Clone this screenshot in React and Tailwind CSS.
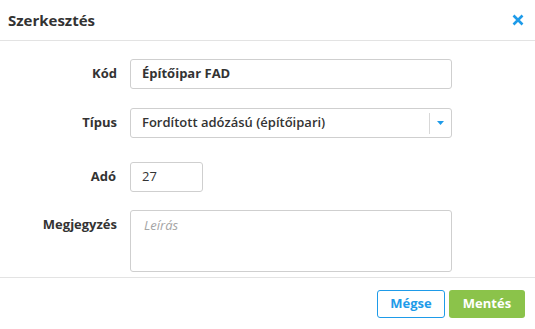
import React from "react";

export default function App() {
  const font = { fontFamily: '"Open Sans", "Noto Sans", sans-serif' };
  return (
    <div className="w-[535px] h-[329px] bg-white text-[#333] overflow-hidden flex flex-col" style={font}>
      <div className="h-[41px] border-b border-[#e3e3e3] flex items-center justify-between pl-2 pr-[11px] shrink-0">
        <div className="text-[15px] font-bold text-[#333] leading-none">Szerkesztés</div>
        <svg width="12" height="12" viewBox="0 0 12 12" className="mt-[-1px]">
          <path d="M1.5 1.5 L10.5 10.5 M10.5 1.5 L1.5 10.5" stroke="#1e9be9" strokeWidth="2.6" strokeLinecap="butt" />
        </svg>
      </div>
      <div className="flex-1 pt-[18px] flex flex-col">
        <div className="flex items-center h-[30px]">
          <div className="w-[117px] text-right text-[13px] font-bold">Kód</div>
          <div className="ml-[13px] w-[322px] h-[30px] border border-[#cfcfcf] rounded-[3px] flex items-center pl-[11px] text-[13px] font-bold">
            Építőipar FAD
          </div>
        </div>
        <div className="flex items-center h-[30px] mt-[19px]">
          <div className="w-[117px] text-right text-[13px] font-bold">Típus</div>
          <div className="ml-[13px] w-[322px] h-[30px] border border-[#cfcfcf] rounded-[3px] flex items-center pl-[11px] text-[13px] font-semibold">
            <span className="flex-1">Fordított adózású (építőipari)</span>
            <div className="w-px h-[21px] bg-[#d8d8d8]"></div>
            <div className="w-[21px] flex items-center justify-center">
              <svg width="7" height="4" viewBox="0 0 7 4">
                <path d="M0 0 L7 0 L3.5 4 Z" fill="#1e9be9" />
              </svg>
            </div>
          </div>
        </div>
        <div className="flex items-center h-[30px] mt-[24px]">
          <div className="w-[116px] text-right text-[13px] font-bold">Adó</div>
          <div className="ml-[14px] w-[73px] h-[30px] border border-[#cfcfcf] rounded-[3px] flex items-center pl-[11px] text-[13px] font-normal">
            27
          </div>
        </div>
        <div className="flex items-start mt-[18px]">
          <div className="w-[117px] text-right text-[13px] font-bold pt-[5px]">Megjegyzés</div>
          <div className="ml-[13px] w-[322px] h-[62px] border border-[#cfcfcf] rounded-[3px] pl-[13px] pt-[5px] text-[13px] italic text-[#a5a5a5]">
            Leírás
          </div>
        </div>
      </div>
      <div className="h-[52px] border-t border-[#e3e3e3] flex items-center justify-end pr-[10px] gap-[4px] shrink-0">
        <button className="w-[68px] h-[28px] border border-[#1e9be9] rounded-[3px] text-[#1e9be9] text-[13px] font-bold bg-white">
          Mégse
        </button>
        <button className="w-[76px] h-[28px] rounded-[3px] bg-[#8bc34a] text-white text-[13px] font-bold">
          Mentés
        </button>
      </div>
    </div>
  );
}
